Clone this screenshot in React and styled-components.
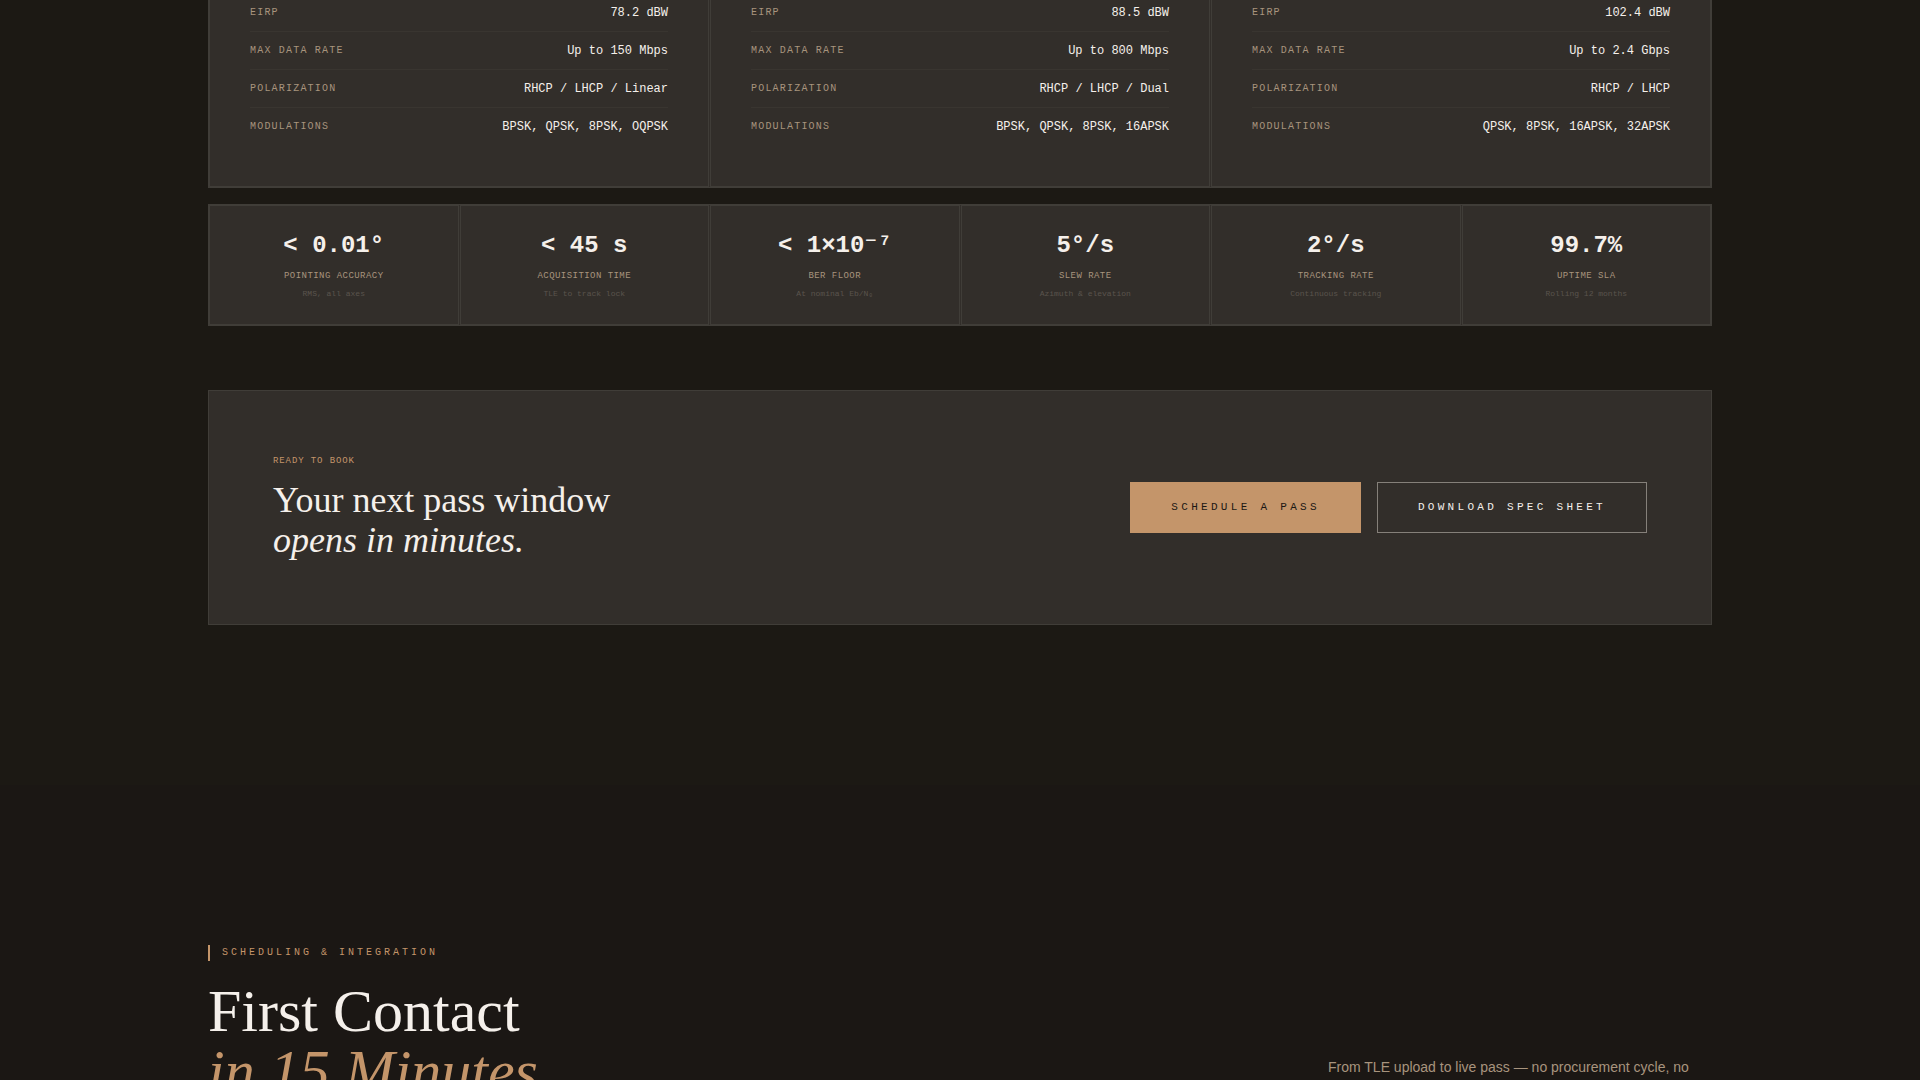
import React from 'react';
import styled, { createGlobalStyle } from 'styled-components';

const GlobalStyle = createGlobalStyle`
	* {
		box-sizing: border-box;
	}
	body {
		margin: 0;
		background: #1b1714;
		color: #f5f0eb;
		font-family: 'Liberation Sans', Arial, sans-serif;
	}
`;

const mono = "'Liberation Mono', 'DejaVu Sans', monospace";
const serif = "'Liberation Serif', 'Times New Roman', serif";

const Page = styled.main`
	height: 100vh;
	overflow: hidden;
`;
const Section = styled.section`
	background: ${({ $tone }) => $tone};
	padding: ${({ $flush }) => ($flush ? '0 48px 160px' : '160px 48px')};
`;
const Container = styled.div`
	max-width: 1504px;
	margin: 0 auto;
`;

const SpecGrid = styled.div`
	display: grid;
	grid-template-columns: repeat(3, 1fr);
	gap: 1px;
	border: 1px solid #403d38;
	border-top: 0;
	background: #322e2a;
`;
const SpecCard = styled.dl`
	margin: 0;
	padding: 0 40px 40px;
	border: 1px solid #403d38;
	border-top: 0;
	background: #322e2a;
`;
const SpecRow = styled.div`
	display: flex;
	justify-content: space-between;
	align-items: center;
	padding: 12px 0 11px;
	border-bottom: 1px solid #393530;
	font-family: ${mono};
	line-height: 14px;

	&:first-child {
		padding-top: 6px;
	}
	&:last-child {
		padding-bottom: 12px;
		border-bottom: 0;
	}
`;
const SpecName = styled.dt`
	color: #a8947e;
	font-size: 10px;
	letter-spacing: 0.12em;
	text-transform: uppercase;
`;
const SpecValue = styled.dd`
	margin: 0;
	font-size: 12px;
`;

const StatGrid = styled.div`
	display: grid;
	grid-template-columns: repeat(6, 1fr);
	gap: 1px;
	margin-top: 16px;
	border: 1px solid #403d38;
	background: #322e2a;
`;
const Stat = styled.div`
	padding: 24px 16px;
	border: 1px solid #403d38;
	background: #322e2a;
	font-family: ${mono};
	text-align: center;
`;
const StatValue = styled.div`
	margin-bottom: 8px;
	font-size: 24px;
	font-weight: 700;
	line-height: 32px;
`;
const StatLabel = styled.div`
	margin-bottom: 6px;
	color: #a8947e;
	font-size: 9px;
	letter-spacing: 0.05em;
	line-height: 12px;
	text-transform: uppercase;
`;
const StatNote = styled.div`
	color: #5a544d;
	font-size: 8px;
	line-height: 12px;
`;

const Callout = styled.div`
	display: flex;
	justify-content: space-between;
	align-items: center;
	gap: 32px;
	margin-top: 64px;
	padding: 64px;
	border: 1px solid #403d38;
	background: #322e2a;
`;
const CalloutLabel = styled.p`
	margin: 0 0 12px;
	color: #c4956a;
	font-family: ${mono};
	font-size: 9px;
	letter-spacing: 0.1em;
	line-height: 13px;
	text-transform: uppercase;
`;
const CalloutTitle = styled.h3`
	margin: 0;
	font-family: ${serif};
	font-size: 36px;
	font-weight: 400;
	line-height: 40px;
`;
const Actions = styled.div`
	display: flex;
	gap: 16px;
`;
const Button = styled.button`
	padding: 18px 40px;
	border: 1px solid ${({ $primary }) => ($primary ? '#c4956a' : '#85807a')};
	border-radius: 0;
	background: ${({ $primary }) => ($primary ? '#c4956a' : 'transparent')};
	color: ${({ $primary }) => ($primary ? '#1c1814' : '#f5f0eb')};
	font-family: ${mono};
	font-size: 11px;
	letter-spacing: 0.3em;
	line-height: 13px;
	text-transform: uppercase;
	cursor: pointer;
`;

const Eyebrow = styled.p`
	margin: 0 0 20px;
	padding-left: 12px;
	border-left: 2px solid #c4956a;
	color: #c4956a;
	font-family: ${mono};
	font-size: 10px;
	letter-spacing: 0.3em;
	line-height: 16px;
	text-transform: uppercase;
`;
const SectionHead = styled.div`
	display: flex;
	justify-content: space-between;
	align-items: flex-end;
`;
const SectionTitle = styled.h2`
	margin: 0;
	font-family: ${serif};
	font-size: 60px;
	font-weight: 400;
	line-height: 60px;

	em {
		color: #c4956a;
	}
`;
const Intro = styled.p`
	flex: 0 0 384px;
	margin: 0 0 22px;
	color: #a8947e;
	font-size: 14px;
	line-height: 24px;
`;

const bands = [
	[
		['EIRP', '78.2 dBW'],
		['Max Data Rate', 'Up to 150 Mbps'],
		['Polarization', 'RHCP / LHCP / Linear'],
		['Modulations', 'BPSK, QPSK, 8PSK, OQPSK'],
	],
	[
		['EIRP', '88.5 dBW'],
		['Max Data Rate', 'Up to 800 Mbps'],
		['Polarization', 'RHCP / LHCP / Dual'],
		['Modulations', 'BPSK, QPSK, 8PSK, 16APSK'],
	],
	[
		['EIRP', '102.4 dBW'],
		['Max Data Rate', 'Up to 2.4 Gbps'],
		['Polarization', 'RHCP / LHCP'],
		['Modulations', 'QPSK, 8PSK, 16APSK, 32APSK'],
	],
];

const stats = [
	{ value: '< 0.01°', label: 'Pointing Accuracy', note: 'RMS, all axes' },
	{ value: '< 45 s', label: 'Acquisition Time', note: 'TLE to track lock' },
	{ value: '< 1×10⁻⁷', label: 'BER Floor', note: 'At nominal Eb/N₀' },
	{ value: '5°/s', label: 'Slew Rate', note: 'Azimuth & elevation' },
	{ value: '2°/s', label: 'Tracking Rate', note: 'Continuous tracking' },
	{ value: '99.7%', label: 'Uptime SLA', note: 'Rolling 12 months' },
];

function SpecList({ rows }) {
	return (
		<SpecCard>
			{rows.map(([name, value]) => (
				<SpecRow key={name}>
					<SpecName>{name}</SpecName>
					<SpecValue>{value}</SpecValue>
				</SpecRow>
			))}
		</SpecCard>
	);
}

function App() {
	return (
		<Page>
			<GlobalStyle />
			<Section $tone="#1c1914" $flush>
				<Container>
					<SpecGrid>
						{bands.map((rows, i) => (
							<SpecList key={i} rows={rows} />
						))}
					</SpecGrid>
					<StatGrid>
						{stats.map(({ value, label, note }) => (
							<Stat key={label}>
								<StatValue>{value}</StatValue>
								<StatLabel>{label}</StatLabel>
								<StatNote>{note}</StatNote>
							</Stat>
						))}
					</StatGrid>
					<Callout>
						<div>
							<CalloutLabel>Ready to book</CalloutLabel>
							<CalloutTitle>
								Your next pass window
								<br />
								<em>opens in minutes.</em>
							</CalloutTitle>
						</div>
						<Actions>
							<Button $primary>Schedule a pass</Button>
							<Button>Download spec sheet</Button>
						</Actions>
					</Callout>
				</Container>
			</Section>
			<Section $tone="#1b1714">
				<Container>
					<Eyebrow>Scheduling &amp; Integration</Eyebrow>
					<SectionHead>
						<SectionTitle>
							First Contact
							<br />
							<em>in 15 Minutes</em>
						</SectionTitle>
						<Intro>From TLE upload to live pass — no procurement cycle, no</Intro>
					</SectionHead>
				</Container>
			</Section>
		</Page>
	);
}

export default App;
